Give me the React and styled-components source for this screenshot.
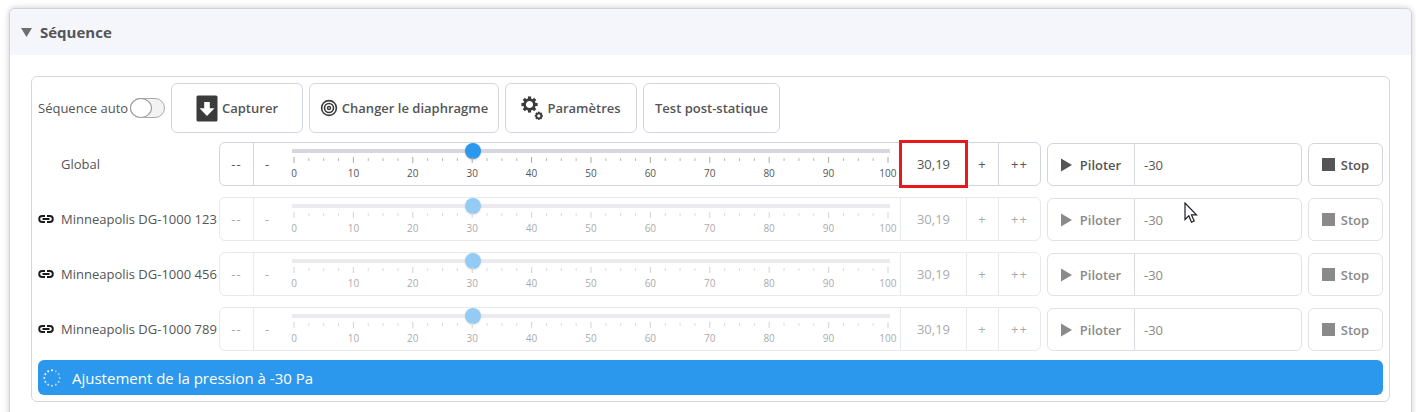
import React from 'react';
import styled, { createGlobalStyle, css } from 'styled-components';

const channels = [
  { id: 'global', label: 'Global', linked: false, marked: true },
  { id: 'dg123', label: 'Minneapolis DG-1000 123', linked: true },
  { id: 'dg456', label: 'Minneapolis DG-1000 456', linked: true },
  { id: 'dg789', label: 'Minneapolis DG-1000 789', linked: true },
];

const marks = [0, 10, 20, 30, 40, 50, 60, 70, 80, 90, 100];
const ticks = Array.from({ length: 41 }, (_, i) => i * 2.5);

const LinkIcon = () => (
  <svg width="16" height="10" viewBox="0 0 16 10" fill="none" stroke="#1c1c1c" strokeWidth="1.900">
    <path d="M7 2H4.200a3 3 0 0 0 0 6H7M9 2h2.800a3 3 0 0 1 0 6H9M4.500 5h7" />
  </svg>
);

const CaptureIcon = () => (
  <svg width="22" height="27" viewBox="0 0 22 27">
    <rect x="0.500" y="0.500" width="21" height="26" rx="1.500" fill="#3b3b3b" />
    <path d="M8.200 7h5.600v6.200h4.700L11 21 3.500 13.200h4.700z" fill="#fff" />
  </svg>
);

const TargetIcon = () => (
  <svg width="18" height="18" viewBox="0 0 18 18" fill="none" stroke="#3b3b3b">
    <circle cx="9" cy="9" r="7.400" strokeWidth="1.600" />
    <circle cx="9" cy="9" r="4.500" strokeWidth="1.600" />
    <circle cx="9" cy="9" r="1.500" strokeWidth="1.400" />
  </svg>
);

// teeth are short strokes laid around the ring
const Gear = ({ cx, cy, r, tooth, stroke }) => (
  <g transform={`translate(${cx} ${cy})`} stroke="#3b3b3b" fill="none">
    <circle r={r} strokeWidth={stroke} />
    {[0, 45, 90, 135, 180, 225, 270, 315].map((a) => (
      <path key={a} d={`M0 ${-r}V${-r - tooth}`} strokeWidth={stroke * 1.2} transform={`rotate(${a})`} />
    ))}
  </g>
);

const GearsIcon = () => (
  <svg width="22" height="24" viewBox="0 0 22 24">
    <Gear cx={8.5} cy={8.5} r={4.9} tooth={3.2} stroke={2.6} />
    <Gear cx={17.8} cy={19.8} r={2.4} tooth={1.7} stroke={1.6} />
  </svg>
);

const Spinner = () => (
  <svg width="18" height="18" viewBox="-9 -9 18 18" fill="#fff">
    {Array.from({ length: 12 }, (_, i) => (
      <circle key={i} cy="-7.700" r="1" opacity={1 - i * 0.05} transform={`rotate(${-i * 30})`} />
    ))}
  </svg>
);

const Pointer = () => (
  <svg width="14" height="22" viewBox="0 0 14 22">
    <path d="M1 1v16.500l3.800-3.600 2.700 6.300 2.700-1.200-2.700-6.100h5z" fill="#fff" stroke="#1d1d2b" strokeWidth="1.200" />
  </svg>
);

function Channel({ channel }) {
  const [value, setValue] = React.useState(30.19);
  const [target, setTarget] = React.useState('-30');
  const off = channel.linked;
  const move = (step) => setValue((v) => Math.min(100, Math.max(0, v + step)));

  return (
    <Row>
      <RowLabel htmlFor={channel.id}>
        <LinkSlot>{channel.linked && <LinkIcon />}</LinkSlot>
        {channel.label}
      </RowLabel>

      <SliderGroup $off={off}>
        <StepButton $width={33} disabled={off} onClick={() => move(-5)}>--</StepButton>
        <StepButton $width={28} $joined disabled={off} onClick={() => move(-1)}>-</StepButton>
        <Scale>
          <Range
            id={channel.id}
            type="range"
            min="0"
            max="100"
            step="0.01"
            value={value}
            disabled={off}
            onChange={(e) => setValue(Number(e.target.value))}
          />
          <Ticks>
            {ticks.map((t) => (
              <line
                key={t}
                x1={`${t}%`}
                x2={`${t}%`}
                y1={t % 10 === 0 ? 0 : 1}
                y2={t % 10 === 0 ? 6 : 4}
                stroke={t % 10 === 0 ? '#aaa' : '#bbb'}
              />
            ))}
          </Ticks>
          <Marks>
            {marks.map((m) => (
              <span key={m}>{m}</span>
            ))}
          </Marks>
        </Scale>
        <Value htmlFor={channel.id} $marked={channel.marked}>
          {value.toFixed(2).replace('.', ',')}
        </Value>
        <StepButton $width={32} disabled={off} onClick={() => move(1)}>+</StepButton>
        <StepButton $width={42} disabled={off} onClick={() => move(5)}>++</StepButton>
      </SliderGroup>

      <DriveGroup $off={off}>
        <DriveButton disabled={off}>
          <svg width="11" height="14" viewBox="0 0 11 14" fill="currentColor">
            <path d="M0 0.500 11 7 0 13.500z" />
          </svg>
          Piloter
        </DriveButton>
        <Target
          aria-label={`Consigne ${channel.label}`}
          value={target}
          disabled={off}
          onChange={(e) => setTarget(e.target.value)}
        />
      </DriveGroup>

      <StopButton $off={off} disabled={off}>
        <svg width="13" height="13" viewBox="0 0 13 13" fill="currentColor">
          <rect width="13" height="13" />
        </svg>
        Stop
      </StopButton>
    </Row>
  );
}

const App = () => {
  const [auto, setAuto] = React.useState(false);
  const [open, setOpen] = React.useState(true);

  return (
    <>
      <GlobalStyle />
      <Panel>
        <PanelHeader onClick={() => setOpen(!open)} aria-expanded={open}>
          <svg width="11" height="9" viewBox="0 0 11 9" fill="#6e6e6e">
            <path d="M0 0h11L5.500 9z" />
          </svg>
          Séquence
        </PanelHeader>
        {open && (
          <PanelBody>
            <Box>
              <Toolbar>
                <AutoLabel htmlFor="auto">Séquence auto</AutoLabel>
                <Switch id="auto" type="checkbox" checked={auto} onChange={(e) => setAuto(e.target.checked)} />
                <ToolButton $width={132}>
                  <CaptureIcon />
                  Capturer
                </ToolButton>
                <ToolButton $width={190}>
                  <TargetIcon />
                  Changer le diaphragme
                </ToolButton>
                <ToolButton $width={132}>
                  <GearsIcon />
                  Paramètres
                </ToolButton>
                <ToolButton $width={137}>Test post-statique</ToolButton>
              </Toolbar>

              <Rows>
                {channels.map((c) => (
                  <Channel key={c.id} channel={c} />
                ))}
              </Rows>

              <Status role="status">
                <Spinner />
                Ajustement de la pression à -30 Pa
              </Status>
            </Box>
          </PanelBody>
        )}
      </Panel>
      <PointerSpot>
        <Pointer />
      </PointerSpot>
    </>
  );
};

const GlobalStyle = createGlobalStyle`
  * {
    box-sizing: border-box;
  }

  html {
    scrollbar-width: none;
  }

  body {
    margin: 0;
    padding: 8px 4px 0 9px;
    background: #fff;
    color: #555;
    font-family: "Open Sans", "Noto Sans", sans-serif;
    font-size: 13px;
  }

  button,
  input {
    margin: 0;
    font: inherit;
    color: inherit;
  }

  svg {
    display: block;
    flex: none;
  }
`;

const button = css`
  display: flex;
  align-items: center;
  justify-content: center;
  padding: 0;
  background: #fff;
  border: 1px solid #d1d5de;
  border-radius: 6px;
  font-weight: 600;
  cursor: pointer;
`;

const Panel = styled.section`
  border: 1px solid #cfd2dc;
  border-radius: 6px;
  box-shadow: 0 0 6px rgba(0, 0, 0, 0.2);
  background: #fff;
`;

const PanelHeader = styled.button`
  display: flex;
  align-items: center;
  gap: 8px;
  width: 100%;
  height: 46px;
  padding: 0 11px;
  border: 0;
  border-radius: 5px 5px 0 0;
  background: #f4f6fb;
  font-size: 15px;
  font-weight: 700;
  cursor: pointer;
`;

const PanelBody = styled.div`
  padding: 21px;
`;

const Box = styled.div`
  padding: 6px;
  border: 1px solid #d3d8df;
  border-radius: 6px;
`;

const Toolbar = styled.div`
  display: flex;
  align-items: center;
  gap: 6px;
`;

const AutoLabel = styled.label`
  width: 86px;
  white-space: nowrap;
`;

const Switch = styled.input`
  appearance: none;
  display: flex;
  flex: none;
  width: 35px;
  height: 20px;
  border: 1px solid #aaa;
  border-radius: 10px;
  background: #f3f3f3;
  cursor: pointer;

  &::before {
    content: '';
    width: 20px;
    margin: -1px;
    border: 1px solid #999;
    border-radius: 50%;
    background: #fff;
  }

  &:checked {
    justify-content: flex-end;
    background: #2c98ed;
  }
`;

const ToolButton = styled.button`
  ${button}
  gap: 4px;
  width: ${({ $width }) => $width}px;
  height: 50px;
  white-space: nowrap;
`;

const Rows = styled.div`
  display: grid;
  gap: 11px;
  margin: 9px 0;
`;

const Row = styled.div`
  display: grid;
  grid-template-columns: 175px minmax(0, 1fr) 255px 75px;
  column-gap: 6px;
  align-items: end;
`;

const RowLabel = styled.label`
  display: flex;
  align-items: center;
  height: 44px;
  white-space: nowrap;
`;

const LinkSlot = styled.span`
  flex: none;
  width: 23px;
`;

const SliderGroup = styled.div`
  display: flex;
  height: 44px;
  border: 1px solid #d1d5de;
  border-radius: 6px;
  opacity: ${({ $off }) => ($off ? 0.5 : 1)};
`;

const StepButton = styled.button`
  flex: none;
  width: ${({ $width }) => $width}px;
  padding: 0;
  border: 0;
  border-left: ${({ $joined }) => ($joined ? '1px solid #d1d5de' : '0')};
  background: none;
  letter-spacing: 1px;
  cursor: pointer;

  output ~ & {
    border-left: 1px solid #d1d5de;
  }
`;

const Scale = styled.div`
  flex: 1;
  min-width: 0;
  padding: 0 12px 0 13px;
`;

const Range = styled.input`
  appearance: none;
  display: block;
  width: calc(100% + 16px);
  height: 16px;
  margin: 0 -8px -2px;
  background: linear-gradient(#d6d7e1, #d6d7e1) center / calc(100% - 12px) 4px no-repeat;
  cursor: pointer;

  &::-webkit-slider-thumb {
    appearance: none;
    width: 16px;
    height: 16px;
    border-radius: 50%;
    background: #2c98ed;
    box-shadow: 0 1px 2px rgba(0, 0, 0, 0.2);
  }
`;

const Ticks = styled.svg`
  width: 100%;
  height: 6px;
  overflow: visible;
`;

const Marks = styled.div`
  display: flex;
  justify-content: space-between;
  margin-top: 2px;
  font-size: 10px;
  line-height: 16px;

  span {
    display: flex;
    justify-content: center;
    width: 0;
  }
`;

const Value = styled.output`
  position: relative;
  display: flex;
  flex: none;
  align-items: center;
  justify-content: center;
  width: 66px;
  border-left: 1px solid #d1d5de;

  ${({ $marked }) =>
    $marked &&
    css`
      &::after {
        content: '';
        position: absolute;
        inset: -3px -2px;
        border: 3px solid #e8191c;
      }
    `}
`;

const DriveGroup = styled.div`
  display: flex;
  height: 43px;
  border: 1px solid ${({ $off }) => ($off ? '#e0e2e8' : '#d1d5de')};
  border-radius: 6px;
  color: ${({ $off }) => ($off ? '#8a8a8a' : '#555')};
`;

const DriveButton = styled.button`
  display: flex;
  flex: none;
  align-items: center;
  justify-content: center;
  gap: 8px;
  width: 87px;
  padding: 0;
  border: 0;
  border-right: 1px solid #d9dce3;
  background: none;
  font-weight: 600;
  cursor: pointer;
`;

const Target = styled.input`
  flex: 1;
  min-width: 0;
  padding: 0 9px;
  border: 0;
  background: none;
`;

const StopButton = styled.button`
  ${button}
  gap: 6px;
  height: 43px;
  border-color: ${({ $off }) => ($off ? '#e0e2e8' : '#d1d5de')};
  color: ${({ $off }) => ($off ? '#8a8a8a' : '#555')};
`;

const Status = styled.div`
  display: flex;
  align-items: center;
  gap: 11px;
  height: 35px;
  padding: 0 5px;
  border-radius: 6px;
  background: #2c98ed;
  color: #fff;
  font-size: 15px;
`;

const PointerSpot = styled.div`
  position: absolute;
  top: 202px;
  left: 1184px;
  pointer-events: none;
`;

export default App;
